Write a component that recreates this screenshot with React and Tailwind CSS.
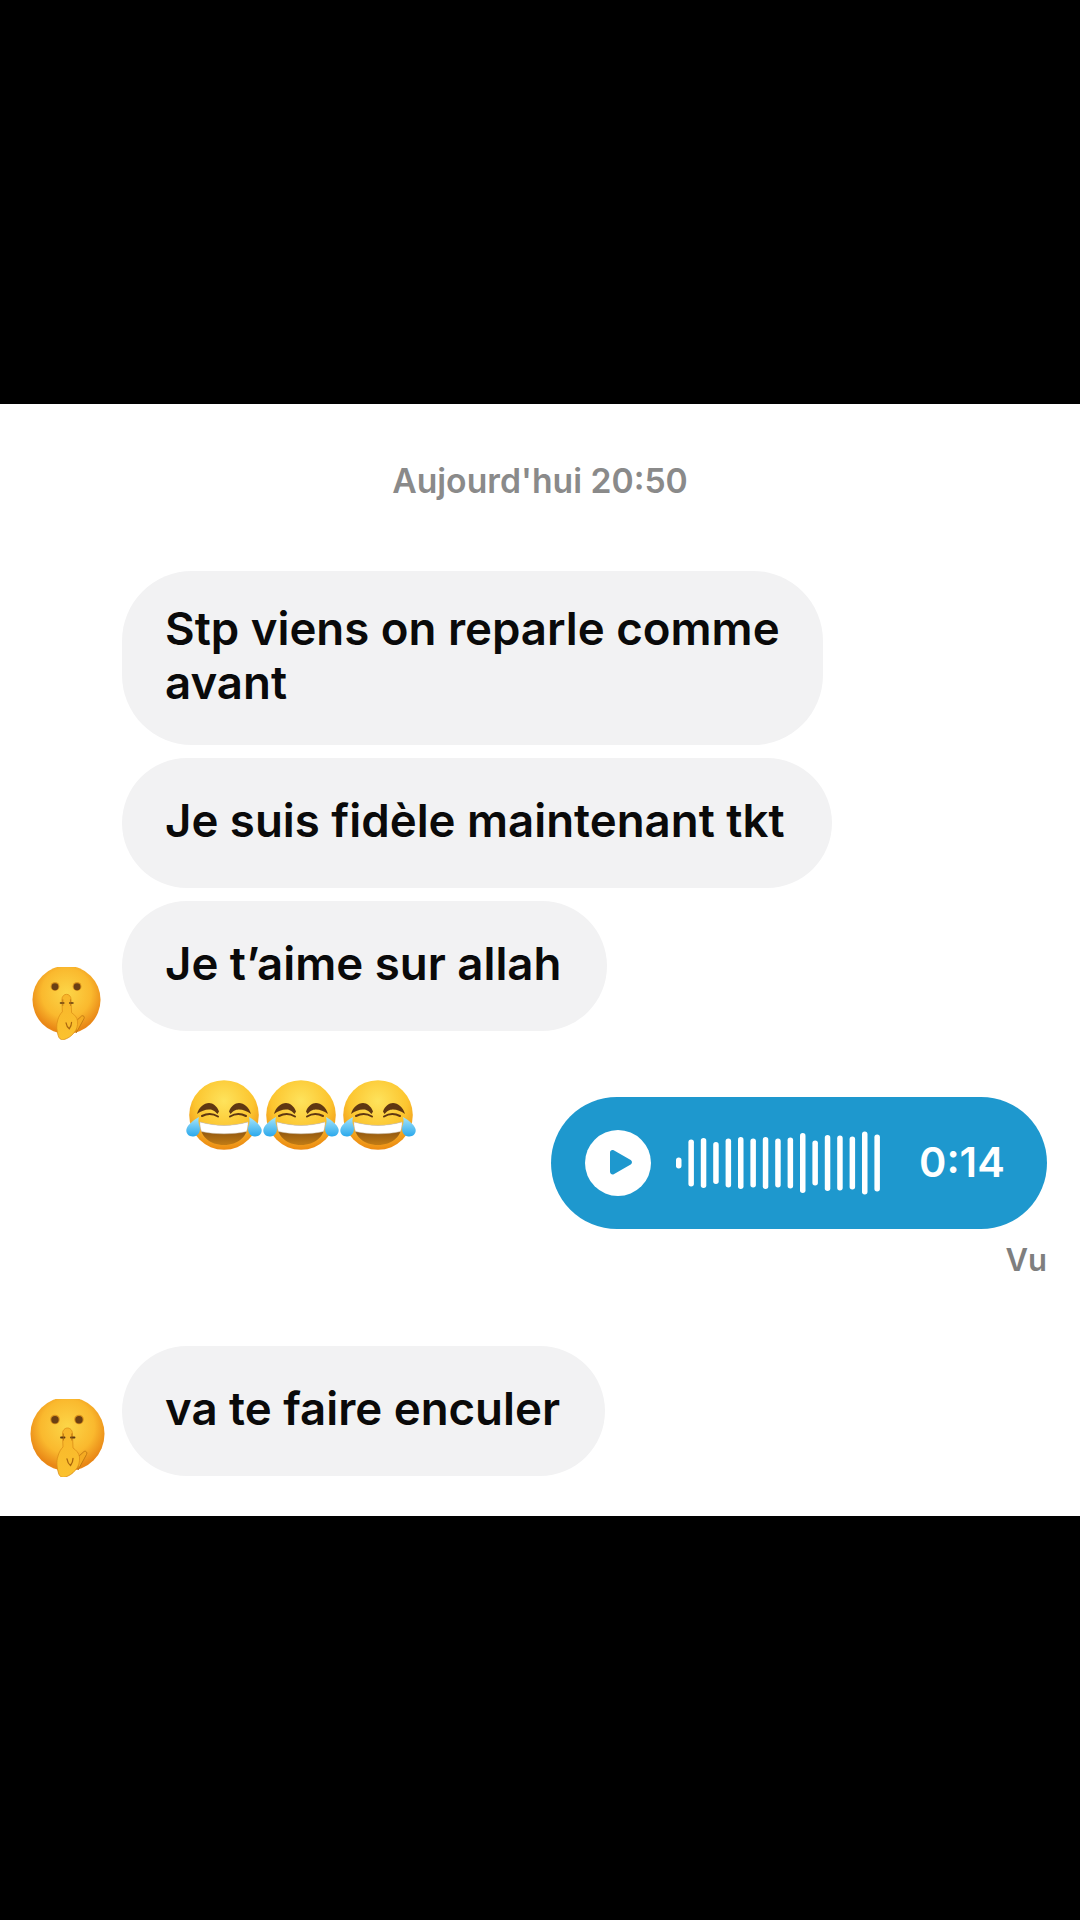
import React from "react";

const BARS = [
  [0, 11], [1, 47], [2, 50], [3, 42], [4, 49], [5, 52], [6, 49], [7, 52], [8, 49],
  [9, 51], [10, 60], [11, 45], [12, 56], [13, 55], [14, 53], [15, 63], [16, 57],
];

const ShushEmoji = ({ id, className }) => (
  <svg viewBox="0 0 75 78" className={className}>
    <defs>
      <radialGradient id={`${id}-face`} cx="50%" cy="40%" r="56%">
        <stop offset="0%" stopColor="#fcd648" />
        <stop offset="65%" stopColor="#fab92e" />
        <stop offset="100%" stopColor="#e98716" />
      </radialGradient>
      <linearGradient id={`${id}-hand`} x1="0" y1="0" x2="0" y2="1">
        <stop offset="0%" stopColor="#f8b62a" />
        <stop offset="100%" stopColor="#fbc22f" />
      </linearGradient>
    </defs>
    <circle cx="37.500" cy="35" r="37" fill={`url(#${id}-face)`} />
    <circle cx="25" cy="20.500" r="4.800" fill="#d9921c" />
    <circle cx="49" cy="20.500" r="4.800" fill="#d9921c" />
    <circle cx="25" cy="20.800" r="3.700" fill="#6b3f14" />
    <circle cx="49" cy="20.800" r="3.700" fill="#6b3f14" />
    <path d="M48 58l6-5.500c2-1 3.500 1 2.500 3L48 71z" fill="#f5ab22" stroke="#b8700f" strokeWidth="0.800" />
    <path
      d="M32.500 35c0-4 2.500-6 5-6s5 2 5 6l.5 14c3 2 6 5 6.500 9 .5 5-1 10-4 13-3 4-7 6-10 7-3 1-6 0-7-4-1.500-5-2.500-11-.5-17 1-4 3-7 5-9z"
      fill={`url(#${id}-hand)`}
      stroke="#dc8d16"
      strokeWidth="0.800"
    />
    <path d="M37 60c.5 3 1.500 5 3.500 6.500 1.500-2 2.500-4 2.500-7" fill="none" stroke="#a9660f" strokeWidth="1.300" strokeLinecap="round" />
    <path d="M31 38.500h3.500M41 38.500h3.500" stroke="#5f3a12" strokeWidth="1.800" strokeLinecap="round" />
    <path d="M33.500 34.500v7M41.800 34.500v7" stroke="#a9660f" strokeWidth="0.700" />
  </svg>
);

const LaughEmoji = ({ id, className }) => (
  <svg viewBox="0 0 76 70" className={className}>
    <defs>
      <radialGradient id={`${id}-face`} cx="50%" cy="30%" r="70%">
        <stop offset="0%" stopColor="#fee35c" />
        <stop offset="60%" stopColor="#fcc52f" />
        <stop offset="100%" stopColor="#ec8a12" />
      </radialGradient>
      <linearGradient id={`${id}-tear`} x1="0" y1="0" x2="0" y2="1">
        <stop offset="0%" stopColor="#a5e4fa" />
        <stop offset="100%" stopColor="#2aa8ec" />
      </linearGradient>
      <linearGradient id={`${id}-mouth`} x1="0" y1="0" x2="0" y2="1">
        <stop offset="0%" stopColor="#6f3e0d" />
        <stop offset="100%" stopColor="#c27c14" />
      </linearGradient>
    </defs>
    <circle cx="38" cy="35" r="34.800" fill={`url(#${id}-face)`} />
    <path d="M11 34c2-7 7-11 12-11 4 0 8 3 10 8.500l-1.500 2.500C28 30 25 29.500 23 29.500 19 29.500 15 31 11 34z" fill="#5f3712" />
    <path d="M65 34c-2-7-7-11-12-11-4 0-8 3-10 8.500l1.500 2.500c3.500-4 6.500-4.500 8.500-4.500 4 0 8 1.500 12 4.500z" fill="#5f3712" />
    <path d="M16 36c5-2.500 11-2.500 16 .5M44 36.500c5-3 11-3 16-.5" fill="none" stroke="#5f3712" strokeWidth="2" strokeLinecap="round" />
    <path d="M14 42c16 4.500 32 4.500 48 0 1 14-10 23-24 23S13 56 14 42z" fill={`url(#${id}-mouth)`} />
    <path d="M14 42c16 4.500 32 4.500 48 0 .2 3.500-.3 6.500-1.500 9.500-14 3-31 3-45 0-1.200-3-1.700-6-1.500-9.500z" fill="#fff" stroke="#cfcac0" strokeWidth="0.500" />
    <path d="M13 37c-1 3.500-.5 6 .5 9 1.500 5-1 10-6 10.500S-.5 53 .5 49c1-4 7-9 12.500-12z" fill={`url(#${id}-tear)`} />
    <path d="M63 37c1 3.500.5 6-.5 9-1.500 5 1 10 6 10.500s8-3.500 7-7.500c-1-4-7-9-12.500-12z" fill={`url(#${id}-tear)`} />
  </svg>
);

const Bubble = ({ className, children }) => (
  <div className={`bg-[#f2f2f3] text-[#0a0a0a] font-semibold text-[45.6px] leading-[54px] pl-[43px] ${className}`}>
    <div className="-translate-y-[2px]">{children}</div>
  </div>
);

const VoiceNote = () => (
  <div className="w-[496px] h-[132px] rounded-[66px] bg-[#1e98ce] flex items-center pl-[34px]">
    <div className="w-[66px] h-[66px] rounded-full bg-white flex items-center justify-center">
      <svg viewBox="0 0 26 30" className="w-[26px] h-[30px] ml-[5px]">
        <path d="M2 4.500c0-2 2-3.200 3.700-2.200l17 9.800c1.700 1 1.700 3.400 0 4.400l-17 9.800C4 27 2 25.800 2 23.800z" fill="#1e98ce" />
      </svg>
    </div>
    <svg viewBox="0 0 206 66" className="w-[206px] h-[66px] ml-[25px]">
      {BARS.map(([i, h]) => (
        <rect key={i} x={i * 12.4} y={33 - h / 2} width="5.500" height={h} rx="2.700" fill="#fff" />
      ))}
    </svg>
    <span className="ml-[37px] text-white font-semibold text-[41.5px] leading-none">0:14</span>
  </div>
);

export default function App() {
  return (
    <div className="w-[1080px] h-[1920px] bg-black pt-[404px] font-['Inter','Liberation_Sans',sans-serif]">
      <div className="bg-white h-[1112px] flex flex-col pt-[56px]">
        <div className="text-center text-[#8a8a8a] font-semibold text-[33.7px] leading-[42px]">Aujourd'hui 20:50</div>

        <div className="flex flex-col items-start gap-[13px] pl-[122px] mt-[69px]">
          <Bubble className="w-[701px] pr-[43px] py-[33px] rounded-[70px]">Stp viens on reparle comme avant</Bubble>
          <Bubble className="w-[710px] py-[38px] rounded-[65px]">Je suis fidèle maintenant tkt</Bubble>
        </div>

        <div className="flex items-start mt-[13px] pl-[32px]">
          <ShushEmoji id="shush-a" className="w-[69px] h-[73px] mt-[66px]" />
          <Bubble className="ml-[21px] w-[485px] py-[38px] rounded-[65px]">Je t’aime sur allah</Bubble>
        </div>

        <div className="flex items-start justify-between mt-[40px] pl-[186px] pr-[33px]">
          <div className="flex gap-[1px]">
            <LaughEmoji id="laugh-a" className="w-[76px] h-[70px]" />
            <LaughEmoji id="laugh-b" className="w-[76px] h-[70px]" />
            <LaughEmoji id="laugh-c" className="w-[76px] h-[70px]" />
          </div>
          <div className="flex flex-col items-end mt-[17px]">
            <VoiceNote />
            <div className="mt-[10px] text-[#7f7f7f] font-semibold text-[31px] leading-[42px]">Vu</div>
          </div>
        </div>

        <div className="flex items-start mt-[65px] pl-[30px]">
          <ShushEmoji id="shush-b" className="w-[75px] h-[78px] mt-[53px]" />
          <Bubble className="ml-[17px] w-[483px] py-[38px] rounded-[65px]">va te faire enculer</Bubble>
        </div>
      </div>
    </div>
  );
}
